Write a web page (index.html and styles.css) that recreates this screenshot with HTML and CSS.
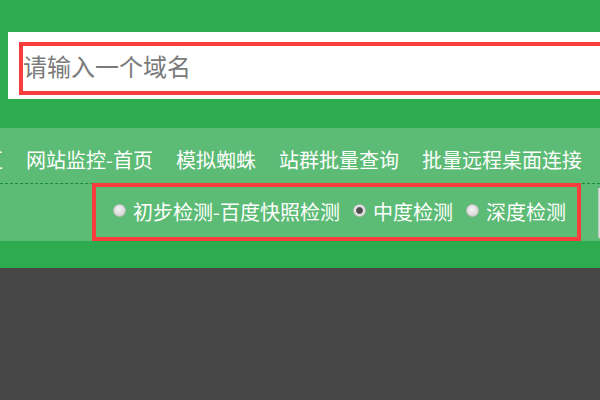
FILE: index.html
```html
<!DOCTYPE html>
<html lang="zh-CN">
<head>
<meta charset="utf-8">
<title>域名检测</title>
<link rel="stylesheet" href="styles.css">
</head>
<body>
<header class="header">
  <div class="search-box">
    <div class="search-input"><span class="placeholder">请输入一个域名</span></div>
  </div>
</header>
<nav class="menu">
  <ul class="links">
    <li class="cut">区</li>
    <li>网站监控-首页</li>
    <li>模拟蜘蛛</li>
    <li>站群批量查询</li>
    <li>批量远程桌面连接</li>
  </ul>
  <div class="options-row">
    <div class="options">
      <label class="option"><span class="radio"></span><span class="label-text">初步检测-百度快照检测</span></label>
      <label class="option"><span class="radio checked"></span><span class="label-text">中度检测</span></label>
      <label class="option"><span class="radio"></span><span class="label-text">深度检测</span></label>
    </div>
    <div class="side-button"></div>
  </div>
</nav>
<div class="band"></div>
</body>
</html>
```

FILE: styles.css
```css
html, body {
  margin: 0;
  padding: 0;
}
body {
  background: #474747;
  font-family: "Noto Sans CJK SC", "Microsoft YaHei", sans-serif;
  overflow: hidden;
  width: 600px;
  height: 400px;
}
.header {
  background: #2dac4f;
  height: 128px;
  padding-top: 32px;
  box-sizing: border-box;
}
.search-box {
  background: #ffffff;
  height: 67px;
  margin: 0 -40px 0 8px;
  padding: 10px 0 4px 11px;
  box-sizing: border-box;
}
.search-input {
  height: 53px;
  border: 4px solid #f83d3d;
  border-right: none;
  box-sizing: border-box;
  display: flex;
  align-items: center;
  padding-left: 0;
}
.placeholder {
  font-size: 24px;
  line-height: 1;
  color: #7a7a7a;
  padding-bottom: 5px;
}
.menu {
  background: #5cbb74;
}
.links {
  list-style: none;
  margin: 0;
  padding: 8px 0 0 0;
  height: 55px;
  box-sizing: border-box;
  display: flex;
  align-items: center;
  gap: 23px;
  font-size: 20px;
  line-height: 1;
  color: #ffffff;
  white-space: nowrap;
}
.links li {
  flex: none;
}
.links .cut {
  margin-left: -17px;
}
.options-row {
  height: 58px;
  border-top: 1px dashed #1a8a38;
  box-sizing: border-box;
  display: flex;
  align-items: flex-start;
}
.options {
  flex: none;
  margin: -1px 0 0 92px;
  width: 489px;
  height: 58px;
  border: 4px solid #f83d3d;
  box-sizing: border-box;
  display: flex;
  align-items: center;
  padding: 0 0 3px 17px;
  gap: 13px;
  color: #ffffff;
  font-size: 20px;
  line-height: 1;
  white-space: nowrap;
}
.option {
  display: flex;
  align-items: center;
  gap: 7px;
}
.label-text {
  padding-top: 3px;
}
.radio {
  flex: none;
  width: 13px;
  height: 13px;
  border-radius: 50%;
  box-sizing: border-box;
  border: 1px solid #bdbdbd;
  background: radial-gradient(circle at 45% 40%, #f4f4f4 0%, #dcdcdc 60%, #c9c9c9 100%);
}
.radio.checked {
  background: radial-gradient(circle, #4d4d4d 0 2.6px, #6e6e6e 3.2px, #e9e9e9 3.8px, #d6d6d6 100%);
}
.side-button {
  margin: 4px 0 0 17px;
  width: 40px;
  height: 50px;
  flex: none;
  background: #d9ddd9;
  border-left: 1px solid #c4c8c4;
}
.band {
  background: #2dac4f;
  height: 27px;
}
```
